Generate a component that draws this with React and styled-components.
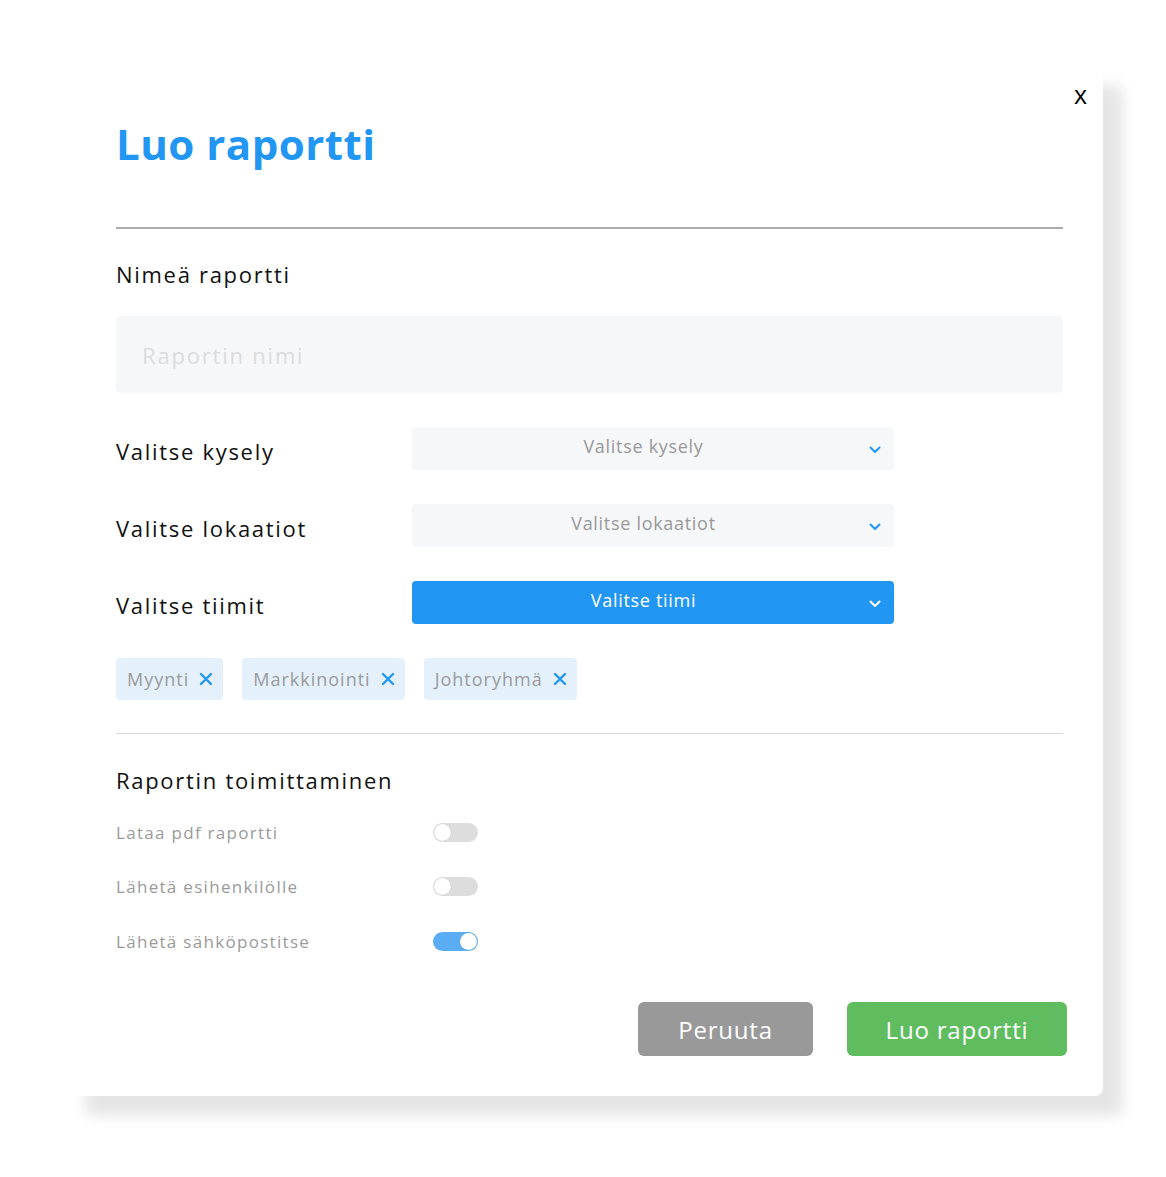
import { useState } from "react"
import styled, { createGlobalStyle } from "styled-components"

const GlobalStyle = createGlobalStyle`
    *{ box-sizing: border-box; }
    body{
        margin: 0;
        background-color: #FFFFFF;
        font-family: 'Open Sans', 'Liberation Sans', sans-serif;
    }
`

const teams = ["Myynti", "Markkinointi", "Johtoryhmä"]

const selects = [
    { label: "Valitse kysely", text: "Valitse kysely", active: false },
    { label: "Valitse lokaatiot", text: "Valitse lokaatiot", active: false },
    { label: "Valitse tiimit", text: "Valitse tiimi", active: true },
]

const deliveryOptions = [
    { label: "Lataa pdf raportti", on: false },
    { label: "Lähetä esihenkilölle", on: false },
    { label: "Lähetä sähköpostitse", on: true },
]

function Chevron({ color }) {
    return (
        <svg width="12" height="8" viewBox="0 0 12 8">
            <path d="M1.5 1.5 L6 6 L10.5 1.5" fill="none" stroke={color} strokeWidth="2" strokeLinecap="round" strokeLinejoin="round" />
        </svg>
    )
}

function Cross() {
    return (
        <svg width="14" height="14" viewBox="0 0 14 14">
            <path d="M2 2 L12 12 M12 2 L2 12" stroke="#2196F3" strokeWidth="2.4" strokeLinecap="round" />
        </svg>
    )
}

export default function App(){

    const [options, setOptions] = useState(deliveryOptions)

    function toggle(i){
        setOptions(options.map((o, j) => j === i ? { ...o, on: !o.on } : o))
    }

    return(
        <SCPage>
            <GlobalStyle />
            <SCModal>
                <SCClose>x</SCClose>
                <SCTitle>Luo raportti</SCTitle>
                <SCDivider />
                <SCLabel>Nimeä raportti</SCLabel>
                <SCInput placeholder="Raportin nimi" />

                <SCSelectList>
                    {selects.map(s => (
                        <SCSelectRow key={s.label}>
                            <SCLabel>{s.label}</SCLabel>
                            <SCSelect active={s.active}>
                                <span>{s.text}</span>
                                <Chevron color={s.active ? "#FFFFFF" : "#2196F3"} />
                            </SCSelect>
                        </SCSelectRow>
                    ))}
                </SCSelectList>

                <SCChips>
                    {teams.map(t => (
                        <SCChip key={t}>
                            <span>{t}</span>
                            <Cross />
                        </SCChip>
                    ))}
                </SCChips>

                <SCThinDivider />

                <SCLabel>Raportin toimittaminen</SCLabel>
                <SCOptions>
                    {options.map((o, i) => (
                        <SCOption key={o.label}>
                            <p>{o.label}</p>
                            <SCToggle on={o.on} onClick={() => toggle(i)}>
                                <div></div>
                            </SCToggle>
                        </SCOption>
                    ))}
                </SCOptions>

                <SCFooter>
                    <SCButton color="#999999">Peruuta</SCButton>
                    <SCButton color="#5FBD5F" wide>Luo raportti</SCButton>
                </SCFooter>
            </SCModal>
        </SCPage>
    )
}

const SCPage = styled.div`
    padding: 65px 0 0 65px;
    min-height: 1177px;
`

const SCModal = styled.div`
    position: relative;
    width: 1038px;
    height: 1031px;
    background-color: #FFFFFF;
    border-radius: 8px;
    box-shadow: 20px 20px 14px rgba(0, 0, 0, 0.1);
    padding: 53px 36px 0 51px;
    display: flex;
    flex-direction: column;
`

const SCClose = styled.div`
    position: absolute;
    top: 12px;
    right: 16px;
    font-family: 'Open Sans', sans-serif;
    font-size: 25px;
    font-weight: 500;
    color: #000000;
`

const SCTitle = styled.h1`
    margin: 0;
    font-family: 'Open Sans', sans-serif;
    font-size: 42px;
    line-height: 52px;
    font-weight: 700;
    letter-spacing: 0.5px;
    color: #2196F3;
`

const SCDivider = styled.div`
    width: 947px;
    height: 2px;
    background-color: #ABABAB;
    margin-top: 57px;
    margin-bottom: 30px;
`

const SCLabel = styled.p`
    margin: 0;
    font-size: 22px;
    line-height: 30px;
    font-weight: 500;
    letter-spacing: 1.7px;
    color: #111111;
`

const SCInput = styled.input`
    width: 947px;
    height: 77px;
    margin-top: 27px;
    border: none;
    outline: none;
    border-radius: 5px;
    background-color: #F6F7F9;
    padding: 0 26px;
    font-family: 'Open Sans', sans-serif;
    font-size: 22px;
    letter-spacing: 1.8px;
    color: #333333;
    &::placeholder{
        color: #DCDCDC;
    }
`

const SCSelectList = styled.div`
    display: flex;
    flex-direction: column;
    gap: 34px;
    margin-top: 34px;
`

const SCSelectRow = styled.div`
    display: flex;
    align-items: center;
    width: 778px;
    justify-content: space-between;
    ${SCLabel}{
        margin-top: 4px;
    }
`

const SCSelect = styled.div`
    width: 482px;
    height: 43px;
    border-radius: 4px;
    background-color: ${p => p.active ? "#2196F3" : "#F6F7F9"};
    display: flex;
    align-items: center;
    padding: 0 13px 0 0;
    span{
        flex: 1;
        text-align: center;
        margin-top: -6px;
        padding-left: 6px;
        font-size: 18px;
        letter-spacing: 0.7px;
        color: ${p => p.active ? "#FFFFFF" : "#999999"};
    }
    svg{
        margin-top: 2px;
    }
`

const SCChips = styled.div`
    display: flex;
    gap: 19px;
    margin-top: 34px;
`

const SCChip = styled.div`
    height: 42px;
    display: flex;
    align-items: center;
    gap: 10px;
    padding: 0 10px 0 11px;
    background-color: #E4F1FD;
    border-radius: 4px;
    span{
        font-size: 18px;
        letter-spacing: 1px;
        color: #9A9A9A;
    }
`

const SCThinDivider = styled.div`
    width: 947px;
    height: 1px;
    background-color: #D9D9D9;
    margin-top: 33px;
    margin-bottom: 31px;
`

const SCOptions = styled.div`
    display: flex;
    flex-direction: column;
    gap: 30.5px;
    margin-top: 25px;
`

const SCOption = styled.div`
    display: flex;
    align-items: center;
    width: 362px;
    justify-content: space-between;
    height: 24px;
    p{
        margin: 0;
        font-size: 17px;
        letter-spacing: 1.3px;
        color: #9A9A9A;
    }
`

const SCToggle = styled.div`
    width: 45px;
    height: 19px;
    border-radius: 10px;
    background-color: ${p => p.on ? "#5AADF5" : "#DDDDDD"};
    position: relative;
    cursor: pointer;
    div{
        position: absolute;
        top: 1px;
        left: ${p => p.on ? "27px" : "1px"};
        width: 17px;
        height: 17px;
        border-radius: 50%;
        background-color: #FFFFFF;
        box-shadow: 0 0 1px rgba(0, 0, 0, 0.25);
    }
`

const SCFooter = styled.div`
    display: flex;
    justify-content: flex-end;
    gap: 34px;
    margin-top: 49px;
`

const SCButton = styled.button`
    width: ${p => p.wide ? "220px" : "175px"};
    height: 54px;
    border: none;
    border-radius: 6px;
    background-color: ${p => p.color};
    font-family: 'Open Sans', sans-serif;
    font-size: 24px;
    letter-spacing: 0.8px;
    color: #FFFFFF;
    cursor: pointer;
`
